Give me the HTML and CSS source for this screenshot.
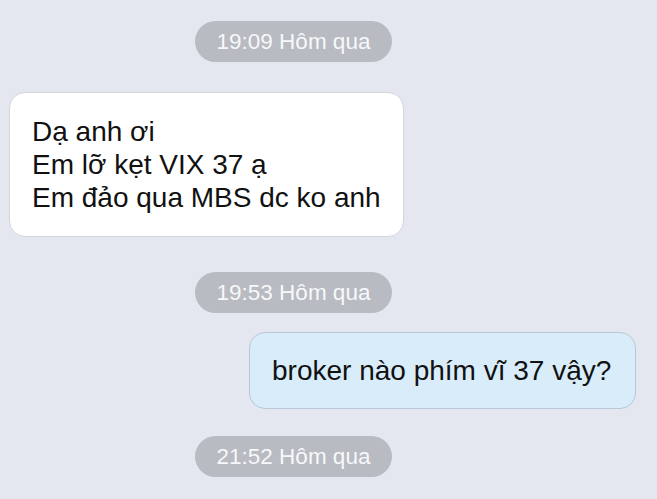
FILE: index.html
```html
<!DOCTYPE html>
<html lang="vi">
<head>
  <meta charset="UTF-8" />
  <meta name="viewport" content="width=device-width, initial-scale=1.0"/>
  <title>Chat</title>
  <link rel="stylesheet" href="styles.css">
</head>
<body>
  <div class="chat">
    <div class="time time-first">19:09 Hôm qua</div>
    <div class="bubble incoming">Dạ anh ơi<br>Em lỡ kẹt VIX 37 ạ<br>Em đảo qua MBS dc ko anh</div>
    <div class="time time-second">19:53 Hôm qua</div>
    <div class="bubble outgoing">broker nào phím vĩ 37 vậy?</div>
    <div class="time time-third">21:52 Hôm qua</div>
  </div>
</body>
</html>
```

FILE: styles.css
```css
body {
  margin: 0;
  background: #E4E7EF;
  font-family: 'Liberation Sans', Arial, sans-serif;
}

.chat {
  display: flex;
  flex-direction: column;
  align-items: flex-start;
  padding-top: 21px;
  height: 499px;
  box-sizing: border-box;
  overflow: hidden;
}

.time {
  margin-left: 195px;
  width: 197px;
  height: 41px;
  line-height: 41px;
  border-radius: 21px;
  background: #B8BBC1;
  color: #F7F8FA;
  font-size: 22.5px;
  text-align: center;
}

.time-second {
  margin-top: 35px;
}

.time-third {
  margin-top: 27px;
}

.bubble {
  font-size: 28px;
  line-height: 33px;
  color: #111111;
  border-radius: 16px;
  padding: 22px;
}

.incoming {
  margin-top: 30px;
  margin-left: 9px;
  width: 349px;
  background: #FFFFFF;
  border: 1px solid #D3D6DD;
}

.outgoing {
  margin-top: 19px;
  margin-left: 249px;
  width: 341px;
  padding-top: 21px;
  padding-bottom: 21px;
  background: #D8ECFA;
  border: 1px solid #B9C8D6;
}
```
